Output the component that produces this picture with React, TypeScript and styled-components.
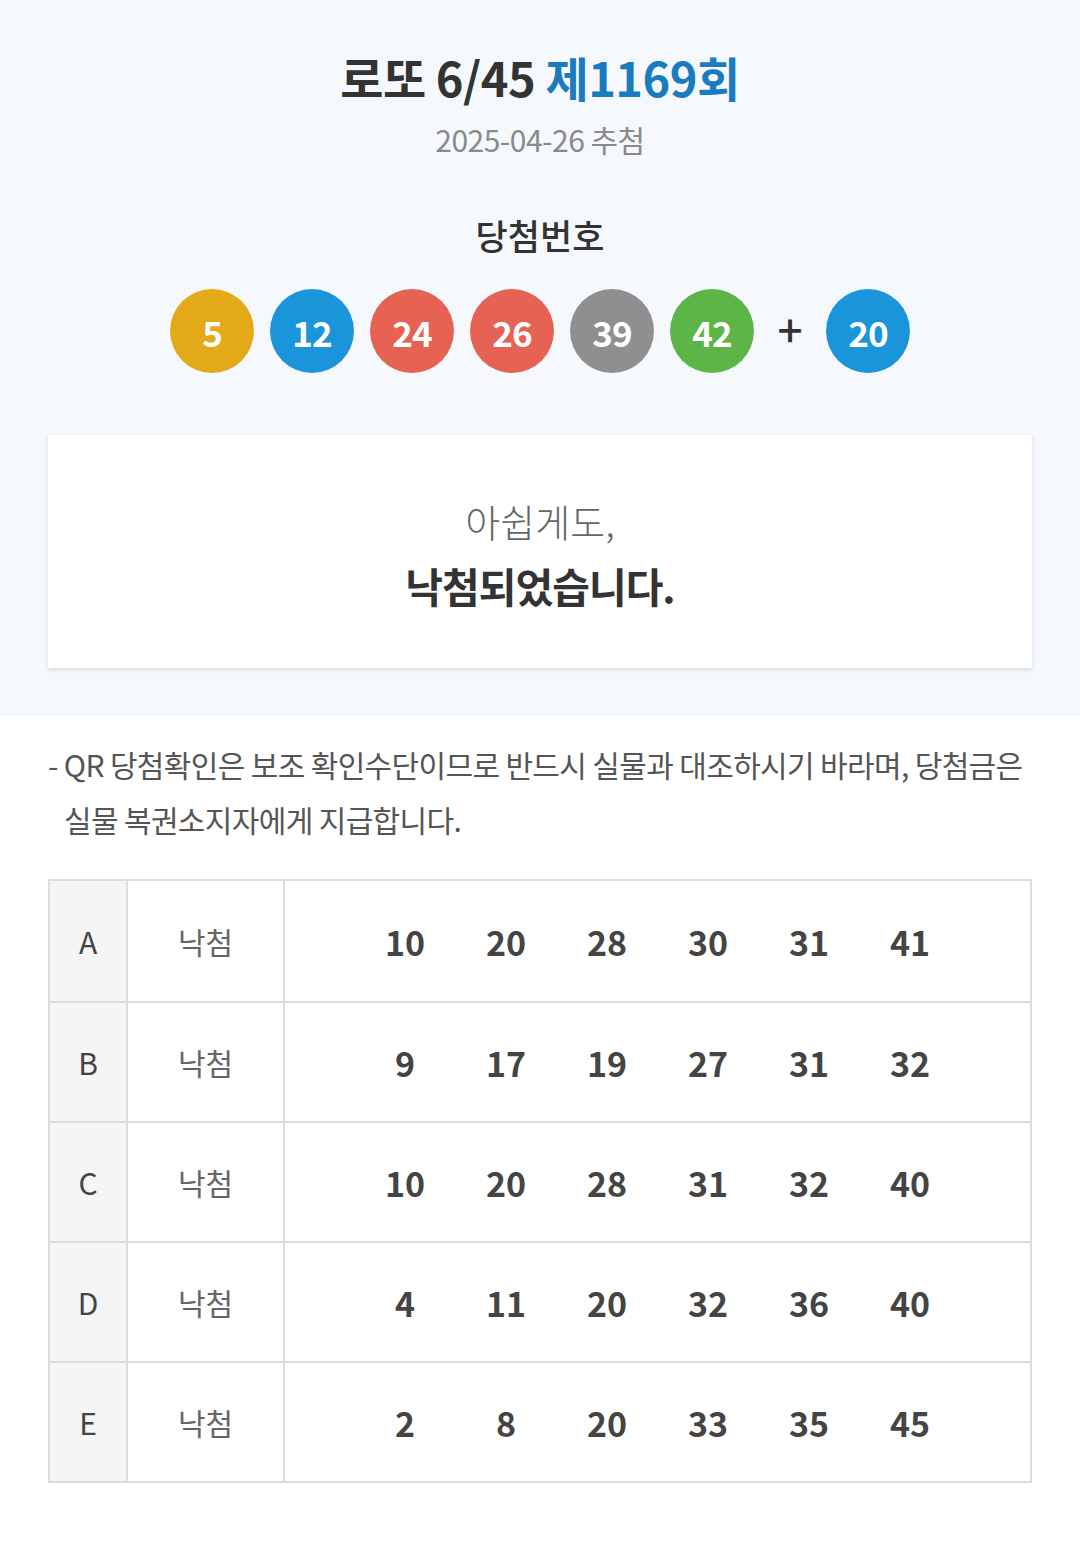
import React from 'react';
import styled, {createGlobalStyle} from 'styled-components';

type BallColor = 'yellow' | 'blue' | 'red' | 'gray' | 'green';

const ballColors: Record<BallColor, string> = {
    yellow: '#e4a918',
    blue: '#1b95d9',
    red: '#e66354',
    gray: '#8f8f8f',
    green: '#5db548',
};

// 1~10 yellow, 11~20 blue, 21~30 red, 31~40 gray, 41~45 green
const colorOf = (n: number): BallColor => {
    if (n <= 10) return 'yellow';
    if (n <= 20) return 'blue';
    if (n <= 30) return 'red';
    if (n <= 40) return 'gray';
    return 'green';
};

const winning = [5, 12, 24, 26, 39, 42];
const bonus = 20;

const games = [
    {label: 'A', result: '낙첨', numbers: [10, 20, 28, 30, 31, 41]},
    {label: 'B', result: '낙첨', numbers: [9, 17, 19, 27, 31, 32]},
    {label: 'C', result: '낙첨', numbers: [10, 20, 28, 31, 32, 40]},
    {label: 'D', result: '낙첨', numbers: [4, 11, 20, 32, 36, 40]},
    {label: 'E', result: '낙첨', numbers: [2, 8, 20, 33, 35, 45]},
];

const GlobalStyle = createGlobalStyle`
  * { box-sizing: border-box; }
  body {
    margin: 0;
    background: #fff;
    font-family: "Noto Sans CJK KR", "Noto Sans", sans-serif;
  }
`;

const App: React.FC = () => {
    return (
        <Page>
            <GlobalStyle/>
            <Header>
                <Title>로또 6/45 <Round>제1169회</Round></Title>
                <DrawDate>2025-04-26 추첨</DrawDate>
                <SubTitle>당첨번호</SubTitle>
                <Balls>
                    {winning.map(n => (
                        <Ball key={n} color={colorOf(n)}>{n}</Ball>
                    ))}
                    <Plus>+</Plus>
                    <Ball color={colorOf(bonus)}>{bonus}</Ball>
                </Balls>
                <ResultCard>
                    <Sorry>아쉽게도,</Sorry>
                    <Verdict>낙첨되었습니다.</Verdict>
                </ResultCard>
            </Header>
            <Body>
                <Notice>
                    - QR 당첨확인은 보조 확인수단이므로 반드시 실물과 대조하시기 바라며, 당첨금은 실물 복권소지자에게 지급합니다.
                </Notice>
                <Games>
                    {games.map(g => (
                        <GameRow key={g.label}>
                            <LabelCell>{g.label}</LabelCell>
                            <ResultCell>{g.result}</ResultCell>
                            <NumbersCell>
                                {g.numbers.map((n, i) => (
                                    <Num key={i}>{n}</Num>
                                ))}
                            </NumbersCell>
                        </GameRow>
                    ))}
                </Games>
            </Body>
        </Page>
    );
};

export default App;

const Page = styled.div`
  width: 1080px;
  min-height: 1549px;
  background: #fff;
`;

const Header = styled.section`
  background: #f5f9fd;
  padding: 45px 48px 48px;
  display: flex;
  flex-direction: column;
  align-items: center;
`;

const Title = styled.h1`
  margin: 0;
  font-size: 47px;
  line-height: 64px;
  font-weight: 700;
  color: #333;
  letter-spacing: -0.5px;
`;

const Round = styled.span`
  color: #1a7bbf;
`;

const DrawDate = styled.div`
  margin-top: 8px;
  font-size: 30px;
  line-height: 44px;
  color: #8a8a8a;
  letter-spacing: -0.5px;
`;

const SubTitle = styled.h2`
  margin: 50px 0 0;
  font-size: 35px;
  line-height: 48px;
  font-weight: 500;
  color: #333;
`;

const Balls = styled.div`
  margin-top: 30px;
  display: flex;
  align-items: center;
  gap: 16px;
`;

const Ball = styled.div<{ color: BallColor }>`
  width: 84px;
  height: 84px;
  border-radius: 50%;
  background: ${p => ballColors[p.color]};
  color: #fff;
  display: flex;
  align-items: center;
  justify-content: center;
  font-size: 35px;
  font-weight: 700;
  letter-spacing: -1px;
`;

const Plus = styled.div`
  width: 40px;
  text-align: center;
  font-size: 44px;
  line-height: 1;
  font-weight: 500;
  color: #333;
  margin-top: -6px;
`;

const ResultCard = styled.div`
  margin-top: 62px;
  width: 100%;
  height: 233px;
  background: #fff;
  box-shadow: 0 2px 4px rgba(0, 0, 0, 0.12);
  display: flex;
  flex-direction: column;
  align-items: center;
  justify-content: center;
  padding-top: 2px;
`;

const Sorry = styled.div`
  font-size: 38px;
  line-height: 56px;
  font-weight: 300;
  color: #666;
`;

const Verdict = styled.div`
  margin-top: 8px;
  font-size: 41px;
  line-height: 56px;
  font-weight: 700;
  color: #333;
  letter-spacing: -1px;
`;

const Body = styled.section`
  padding: 21px 48px 60px;
`;

const Notice = styled.p`
  margin: 0;
  padding-left: 16px;
  text-indent: -16px;
  font-size: 30px;
  line-height: 55px;
  color: #555;
  letter-spacing: -0.65px;
  word-break: keep-all;
`;

const Games = styled.div`
  margin-top: 32px;
  border: 2px solid #dcdcdc;
`;

const GameRow = styled.div`
  display: grid;
  grid-template-columns: 78px 157px 1fr;
  height: 120px;
  & + & {
    border-top: 2px solid #dcdcdc;
  }
`;

const LabelCell = styled.div`
  background: #f5f5f5;
  border-right: 2px solid #dcdcdc;
  display: flex;
  align-items: center;
  justify-content: center;
  font-size: 30px;
  color: #444;
`;

const ResultCell = styled.div`
  border-right: 2px solid #dcdcdc;
  display: flex;
  align-items: center;
  justify-content: center;
  font-size: 30px;
  color: #666;
`;

const NumbersCell = styled.div`
  display: flex;
  align-items: center;
  justify-content: center;
`;

const Num = styled.span`
  width: 101px;
  text-align: center;
  font-size: 34px;
  font-weight: 700;
  color: #444;
`;
